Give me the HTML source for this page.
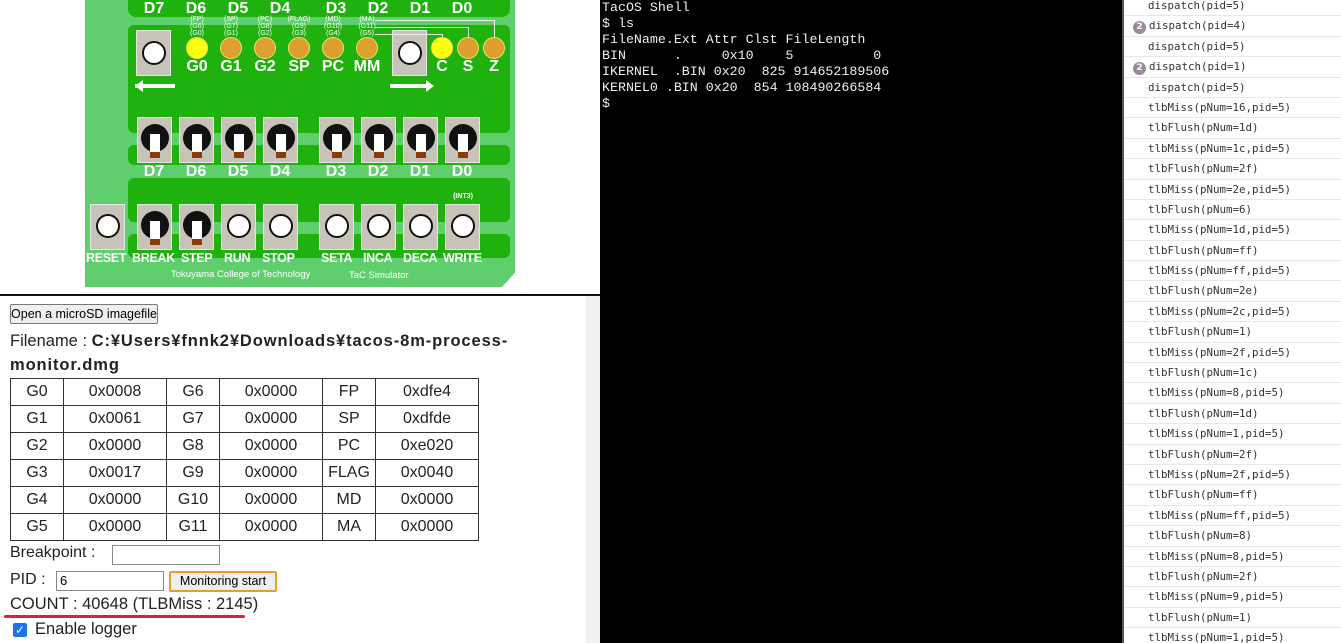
<!DOCTYPE html>
<html><head><meta charset="utf-8">
<style>
*{margin:0;padding:0;box-sizing:border-box}
body{width:1341px;height:643px;overflow:hidden;background:#fff;position:relative;font-family:"Liberation Sans",sans-serif}
.a{position:absolute}
.dg{position:absolute;background:#1fb20e}
.lbl{position:absolute;color:#fff;font-weight:bold;font-size:16px;text-align:center;width:40px;line-height:16px}
.sm{position:absolute;color:#fff;font-size:7px;text-align:center;width:40px;line-height:7px}
.sw{position:absolute;width:35px;height:46px;background:#c8c3b8;border:1px solid #e6e6e6}
.sw .k{position:absolute;left:3px;top:6px;width:28px;height:28px;border-radius:50%;background:#111}
.sw .l{position:absolute;left:12px;top:16px;width:10px;height:24px;background:#fff}
.sw .b{position:absolute;left:12px;top:34px;width:10px;height:6px;background:#8b3a0a}
.sw .w{position:absolute;left:5px;top:9px;width:24px;height:24px;border-radius:50%;background:#fff;border:2px solid #111}
.led{position:absolute;width:22px;height:22px;border-radius:50%;background:#dca030;border:1px solid #f0e060}
table{border-collapse:collapse;position:absolute;left:10px;top:378px}
td{border:1px solid #333;height:27px;text-align:center;font-size:16px;color:#222}
.log{position:absolute;left:1122px;top:0;width:219px;height:643px;border-left:2px solid #555;background:#fff;font-family:"DejaVu Sans Mono",monospace;font-size:10.8px;color:#333;overflow:hidden}
.log div{height:20.4px;line-height:20px;padding-left:24px;border-bottom:1px solid #e8e8e8}
.log span.n{display:inline-block;width:13px;height:13px;border-radius:50%;background:#9a8a9a;color:#fff;font-size:9px;line-height:13px;text-align:center;margin-left:-15px;margin-right:3px;font-family:"DejaVu Sans",sans-serif;font-weight:bold}
</style></head><body>

<!-- board -->
<div class="a" style="left:85px;top:0;width:430px;height:287px;background:#5fcf6e;clip-path:polygon(0 0,100% 0,100% 95%,97% 100%,0 100%)"></div>
<div class="dg" style="left:128px;top:0;width:382px;height:17px;border-radius:0 0 8px 8px"></div>
<div class="dg" style="left:128px;top:25px;width:382px;height:108px;border-radius:6px"></div>
<div class="dg" style="left:128px;top:145px;width:382px;height:20px;border-radius:6px"></div>
<div class="dg" style="left:128px;top:178px;width:382px;height:44px;border-radius:6px"></div>
<div class="dg" style="left:128px;top:234px;width:382px;height:24px;border-radius:6px"></div>

<div class="lbl" style="left:134px;top:1px">D7</div><div class="lbl" style="left:176px;top:1px">D6</div><div class="lbl" style="left:218px;top:1px">D5</div><div class="lbl" style="left:260px;top:1px">D4</div>
<div class="lbl" style="left:316px;top:1px">D3</div><div class="lbl" style="left:358px;top:1px">D2</div><div class="lbl" style="left:400px;top:1px">D1</div><div class="lbl" style="left:442px;top:1px">D0</div>

<div class="sw" style="left:136px;top:30px;height:46px"><div class="w" style="top:10px"></div></div>
<div class="sw" style="left:392px;top:30px;height:46px"><div class="w" style="top:10px"></div></div>
<div class="a" style="left:135px;top:84px;width:40px;height:4px;background:#fff"></div>
<div class="a" style="left:135px;top:80px;width:0;height:0;border:6px solid transparent;border-right:8px solid #fff;border-left:0"></div>
<div class="a" style="left:390px;top:84px;width:38px;height:4px;background:#fff"></div>
<div class="a" style="left:426px;top:80px;width:0;height:0;border:6px solid transparent;border-left:8px solid #fff;border-right:0"></div>

<div class="sm" style="left:177px;top:16px">(FP)<br>(G6)<br>(G0)</div>
<div class="sm" style="left:211px;top:16px">(SP)<br>(G7)<br>(G1)</div>
<div class="sm" style="left:245px;top:16px">(PC)<br>(G8)<br>(G2)</div>
<div class="sm" style="left:279px;top:16px">(FLAG)<br>(G9)<br>(G3)</div>
<div class="sm" style="left:313px;top:16px">(MD)<br>(G10)<br>(G4)</div>
<div class="sm" style="left:347px;top:16px">(MA)<br>(G11)<br>(G5)</div>
<div class="a" style="left:375px;top:20px;width:120px;height:18px;border-top:1px solid #eee;border-right:1px solid #eee"></div>
<div class="a" style="left:375px;top:27px;width:94px;height:11px;border-top:1px solid #eee;border-right:1px solid #eee"></div>
<div class="a" style="left:375px;top:34px;width:68px;height:4px;border-top:1px solid #eee;border-right:1px solid #eee"></div>

<div class="led" style="left:186px;top:37px;background:#ffff10"></div>
<div class="led" style="left:220px;top:37px"></div>
<div class="led" style="left:254px;top:37px"></div>
<div class="led" style="left:288px;top:37px"></div>
<div class="led" style="left:322px;top:37px"></div>
<div class="led" style="left:356px;top:37px"></div>
<div class="led" style="left:431px;top:37px;background:#ffff10"></div>
<div class="led" style="left:457px;top:37px"></div>
<div class="led" style="left:483px;top:37px"></div>
<div class="lbl" style="left:177px;top:59px">G0</div><div class="lbl" style="left:211px;top:59px">G1</div><div class="lbl" style="left:245px;top:59px">G2</div><div class="lbl" style="left:279px;top:59px">SP</div><div class="lbl" style="left:313px;top:59px">PC</div><div class="lbl" style="left:347px;top:59px">MM</div>
<div class="lbl" style="left:422px;top:59px">C</div><div class="lbl" style="left:448px;top:59px">S</div><div class="lbl" style="left:474px;top:59px">Z</div>

<div class="sw" style="left:137px;top:117px"><div class="k"></div><div class="l"></div><div class="b"></div></div>
<div class="sw" style="left:179px;top:117px"><div class="k"></div><div class="l"></div><div class="b"></div></div>
<div class="sw" style="left:221px;top:117px"><div class="k"></div><div class="l"></div><div class="b"></div></div>
<div class="sw" style="left:263px;top:117px"><div class="k"></div><div class="l"></div><div class="b"></div></div>
<div class="sw" style="left:319px;top:117px"><div class="k"></div><div class="l"></div><div class="b"></div></div>
<div class="sw" style="left:361px;top:117px"><div class="k"></div><div class="l"></div><div class="b"></div></div>
<div class="sw" style="left:403px;top:117px"><div class="k"></div><div class="l"></div><div class="b"></div></div>
<div class="sw" style="left:445px;top:117px"><div class="k"></div><div class="l"></div><div class="b"></div></div>
<div class="lbl" style="left:134px;top:164px">D7</div><div class="lbl" style="left:176px;top:164px">D6</div><div class="lbl" style="left:218px;top:164px">D5</div><div class="lbl" style="left:260px;top:164px">D4</div>
<div class="lbl" style="left:316px;top:164px">D3</div><div class="lbl" style="left:358px;top:164px">D2</div><div class="lbl" style="left:400px;top:164px">D1</div><div class="lbl" style="left:442px;top:164px">D0</div>

<div class="sw" style="left:90px;top:204px"><div class="w"></div></div>
<div class="sw" style="left:137px;top:204px"><div class="k"></div><div class="l"></div><div class="b"></div></div>
<div class="sw" style="left:179px;top:204px"><div class="k"></div><div class="l"></div><div class="b"></div></div>
<div class="sw" style="left:221px;top:204px"><div class="w"></div></div>
<div class="sw" style="left:263px;top:204px"><div class="w"></div></div>
<div class="sw" style="left:319px;top:204px"><div class="w"></div></div>
<div class="sw" style="left:361px;top:204px"><div class="w"></div></div>
<div class="sw" style="left:403px;top:204px"><div class="w"></div></div>
<div class="sw" style="left:445px;top:204px"><div class="w"></div></div>
<div class="a" style="left:446px;top:193px;width:34px;color:#fff;font-size:7px;font-weight:bold;text-align:center">(INT3)</div>
<div class="a" style="left:86px;top:251px;width:430px;height:14px;color:#fff;font-size:12.5px;font-weight:bold;letter-spacing:-0.3px">
<span class="a" style="left:0">RESET</span><span class="a" style="left:46px">BREAK</span><span class="a" style="left:95px">STEP</span><span class="a" style="left:138px">RUN</span><span class="a" style="left:176px">STOP</span><span class="a" style="left:235px">SETA</span><span class="a" style="left:277px">INCA</span><span class="a" style="left:317px">DECA</span><span class="a" style="left:357px">WRITE</span></div>
<div class="a" style="left:171px;top:269px;color:#fff;font-size:9.5px">Tokuyama College of Technology</div>
<div class="a" style="left:349px;top:270px;color:#fff;font-size:9.5px">TaC Simulator</div>

<div class="a" style="left:0;top:294px;width:600px;height:2px;background:#111"></div>
<div class="a" style="left:586px;top:296px;width:14px;height:347px;background:#f1f1f1"></div>

<div class="a" style="left:10px;top:304px;width:148px;height:20px;background:#efefef;border:1px solid #777;border-radius:2px;font-size:12.5px;line-height:18px;text-align:center;color:#000">Open a microSD imagefile</div>
<div class="a" style="left:10px;top:329px;width:540px;font-size:16.5px;line-height:24px;color:#222">Filename : <b style="letter-spacing:0.9px">C:¥Users¥fnnk2¥Downloads¥tacos-8m-process-<br>monitor.dmg</b></div>
<table>
<tr><td style="width:53px">G0</td><td style="width:103px">0x0008</td><td style="width:53px">G6</td><td style="width:103px">0x0000</td><td style="width:53px">FP</td><td style="width:103px">0xdfe4</td></tr>
<tr><td>G1</td><td>0x0061</td><td>G7</td><td>0x0000</td><td>SP</td><td>0xdfde</td></tr>
<tr><td>G2</td><td>0x0000</td><td>G8</td><td>0x0000</td><td>PC</td><td>0xe020</td></tr>
<tr><td>G3</td><td>0x0017</td><td>G9</td><td>0x0000</td><td>FLAG</td><td>0x0040</td></tr>
<tr><td>G4</td><td>0x0000</td><td>G10</td><td>0x0000</td><td>MD</td><td>0x0000</td></tr>
<tr><td>G5</td><td>0x0000</td><td>G11</td><td>0x0000</td><td>MA</td><td>0x0000</td></tr>
</table>
<div class="a" style="left:10px;top:544px;font-size:16px;color:#222">Breakpoint :</div>
<div class="a" style="left:112px;top:545px;width:108px;height:20px;border:1px solid #888"></div>
<div class="a" style="left:10px;top:571px;font-size:16px;color:#222">PID :</div>
<div class="a" style="left:56px;top:571px;width:108px;height:20px;border:1px solid #888;font-size:13px;padding-left:3px;line-height:18px">6</div>
<div class="a" style="left:169px;top:571px;width:108px;height:21px;border:2px solid #e0a030;background:#eee;border-radius:2px;font-size:12.5px;text-align:center;line-height:17px">Monitoring start</div>
<div class="a" style="left:10px;top:595px;font-size:16.5px;color:#222">COUNT : 40648 (TLBMiss : 2145)</div>
<div class="a" style="left:4px;top:615px;width:241px;height:3px;background:#e02030;border-radius:2px"></div>
<div class="a" style="left:13px;top:623px;width:14px;height:14px;background:#1a73e8;border-radius:2px;color:#fff;font-size:12px;line-height:14px;text-align:center">✓</div>
<div class="a" style="left:35px;top:620px;font-size:16.5px;color:#222">Enable logger</div>

<div class="a" style="left:600px;top:0;width:522px;height:643px;background:#000"></div>
<pre class="a" style="left:602px;top:0;color:#eee;font-family:'Liberation Mono',monospace;font-size:13.3px;line-height:16px">TacOS Shell
$ ls
FileName.Ext Attr Clst FileLength
BIN      .     0x10    5          0
IKERNEL  .BIN 0x20  825 914652189506
KERNEL0 .BIN 0x20  854 108490266584
$</pre>

<div class="log"><div style="margin-top:-4px">dispatch(pid=5)</div>
<div><span class="n">2</span>dispatch(pid=4)</div>
<div>dispatch(pid=5)</div>
<div><span class="n">2</span>dispatch(pid=1)</div>
<div>dispatch(pid=5)</div>
<div>tlbMiss(pNum=16,pid=5)</div>
<div>tlbFlush(pNum=1d)</div>
<div>tlbMiss(pNum=1c,pid=5)</div>
<div>tlbFlush(pNum=2f)</div>
<div>tlbMiss(pNum=2e,pid=5)</div>
<div>tlbFlush(pNum=6)</div>
<div>tlbMiss(pNum=1d,pid=5)</div>
<div>tlbFlush(pNum=ff)</div>
<div>tlbMiss(pNum=ff,pid=5)</div>
<div>tlbFlush(pNum=2e)</div>
<div>tlbMiss(pNum=2c,pid=5)</div>
<div>tlbFlush(pNum=1)</div>
<div>tlbMiss(pNum=2f,pid=5)</div>
<div>tlbFlush(pNum=1c)</div>
<div>tlbMiss(pNum=8,pid=5)</div>
<div>tlbFlush(pNum=1d)</div>
<div>tlbMiss(pNum=1,pid=5)</div>
<div>tlbFlush(pNum=2f)</div>
<div>tlbMiss(pNum=2f,pid=5)</div>
<div>tlbFlush(pNum=ff)</div>
<div>tlbMiss(pNum=ff,pid=5)</div>
<div>tlbFlush(pNum=8)</div>
<div>tlbMiss(pNum=8,pid=5)</div>
<div>tlbFlush(pNum=2f)</div>
<div>tlbMiss(pNum=9,pid=5)</div>
<div>tlbFlush(pNum=1)</div>
<div>tlbMiss(pNum=1,pid=5)</div>
</div>
</body></html>
